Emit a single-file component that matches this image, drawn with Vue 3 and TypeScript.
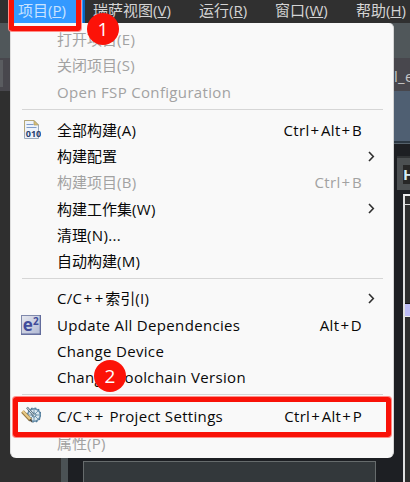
<script setup lang="ts">
interface MenuItem {
  label: string
  shortcut?: string
  icon?: 'binary' | 'e2' | 'settings'
  disabled?: boolean
  submenu?: boolean
}

const groups: MenuItem[][] = [
  [
    { label: '打开项目(E)', disabled: true },
    { label: '关闭项目(S)', disabled: true },
    { label: 'Open FSP Configuration', disabled: true },
  ],
  [
    { label: '全部构建(A)', shortcut: 'Ctrl+Alt+B', icon: 'binary' },
    { label: '构建配置', submenu: true },
    { label: '构建项目(B)', shortcut: 'Ctrl+B', disabled: true },
    { label: '构建工作集(W)', submenu: true },
    { label: '清理(N)...' },
    { label: '自动构建(M)' },
  ],
  [
    { label: 'C/C++索引(I)', submenu: true },
    { label: 'Update All Dependencies', shortcut: 'Alt+D', icon: 'e2' },
    { label: 'Change Device' },
    { label: 'Change Toolchain Version' },
  ],
  [
    { label: 'C/C++ Project Settings', shortcut: 'Ctrl+Alt+P', icon: 'settings' },
    { label: '属性(P)', disabled: true },
  ],
]

const bar = [
  { name: '项目', key: 'P' },
  { name: '瑞萨视图', key: 'V' },
  { name: '运行', key: 'R' },
  { name: '窗口', key: 'W' },
  { name: '帮助', key: 'H' },
]

// Splits a text into runs, so that Latin letters and plus signs get their own tracking.
function runs(text: string): { text: string; kind: string }[] {
  const parts = text.match(/\++|[\u4e00-\u9fff]+|[^+\u4e00-\u9fff]+/g) ?? []
  return parts.map((part) => ({
    text: part,
    kind: part[0] === '+' ? 'plus' : /[\u4e00-\u9fff]/.test(part) ? 'han' : 'latin',
  }))
}
</script>

<template>
  <div class="window">
    <nav class="menubar">
      <span v-for="(b, i) in bar" :key="b.key" class="top" :class="{ active: i === 0 }">{{ b.name }}(<u>{{ b.key }}</u>)</span>
    </nav>
    <div class="toolbar"></div>
    <div class="tabs"><span class="stub"></span><span class="tabname">l_e</span></div>
    <div class="workspace">
      <div class="side"></div>
      <div class="sash"></div>
      <div class="editor"><div class="panel"></div></div>
      <div class="right">
        <div class="header"></div>
        <div class="gap"></div>
        <div class="tab"><span>H</span></div>
        <div class="list">
          <div class="first"></div>
          <div class="space"></div>
          <div class="selected"></div>
        </div>
      </div>
    </div>

    <div class="menu">
      <div v-for="(group, g) in groups" :key="g" class="group">
        <div v-for="item in group" :key="item.label" class="item" :class="{ disabled: item.disabled }">
          <span class="icon">
            <svg v-if="item.icon === 'binary'" width="20" height="20" viewBox="0 0 20 20">
              <path d="M3.5 .5H13L17.5 5V18.5H3.5Z" fill="#edf3fb" stroke="#9caabc" />
              <path d="M3.5 12V.5H13" fill="none" stroke="#b5a778" />
              <path d="M13 .5V5h4.5Z" fill="#d9bf72" stroke="#ad9c68" stroke-width=".7" />
              <path d="M5.5 4.5h7M5.5 7.5h10" stroke="#7e9bc9" />
              <text x="4.8" y="16.6" class="bits">010</text>
            </svg>
            <svg v-else-if="item.icon === 'e2'" width="20" height="20" viewBox="0 0 20 20">
              <defs>
                <linearGradient id="e2bg" x2="1" y2="1"><stop stop-color="#e6e8ef" /><stop offset="1" stop-color="#b0b8d3" /></linearGradient>
              </defs>
              <rect x=".5" y=".5" width="19" height="19" fill="url(#e2bg)" stroke="#8089ac" />
              <path d="M0 19.2h20M19.3 0v20" stroke="#606a9b" stroke-width="1.2" />
              <text x="1.8" y="16" class="e">e</text>
              <text x="12" y="9.5" class="two">2</text>
            </svg>
            <svg v-else-if="item.icon === 'settings'" width="20" height="20" viewBox="0 0 20 20">
              <circle cx="13" cy="9" r="6.3" fill="#dce8ef" stroke="#648daa" stroke-width="1.5" />
              <circle cx="13" cy="9" r="7" fill="none" stroke="#4f7997" stroke-width="1.2" stroke-dasharray="1.7 2" />
              <path d="M13 3v12M7 9h12M9 5l8 8M17 5l-8 8" stroke="#769ab0" />
              <circle cx="13" cy="9" r="2" fill="#edf5f8" stroke="#547e98" />
              <path d="M1.5 5.5l8 8.5" stroke="#9a7a42" stroke-width="3.8" />
              <path d="M1.5 5l8 8.5" stroke="#e8ca86" stroke-width="2" />
              <path d="M8 14l3.3 2.8-.9-4.3Z" fill="#554d40" />
              <path d="M6 1.5l7 8" stroke="#526b7c" stroke-width="2.3" />
              <path d="M6 1.5l7 8" stroke="#d9e4e8" stroke-width="1" />
            </svg>
          </span>
          <span class="label"><span v-for="(r, k) in runs(item.label)" :key="k" :class="r.kind">{{ r.text }}</span></span>
          <span v-if="item.shortcut" class="shortcut"><span v-for="(r, k) in runs(item.shortcut)" :key="k" :class="r.kind">{{ r.text }}</span></span>
          <svg v-if="item.submenu" class="arrow" width="7" height="11" viewBox="0 0 7 11"><path d="M1 1l4.3 4.5L1 10" fill="none" stroke="#303030" stroke-width="1.6" /></svg>
        </div>
      </div>
    </div>

    <div class="mark mark-top"></div>
    <div class="mark mark-item"></div>
    <div class="badge one">1</div>
    <div class="badge two-badge">2</div>
  </div>
</template>

<style>
body { margin: 0; overflow: hidden; }
</style>

<style scoped>
.window {
  position: relative;
  width: 410px;
  height: 482px;
  overflow: hidden;
  display: flex;
  flex-direction: column;
  background: #2f2f2f;
  font-family: "Open Sans", "Noto Sans CJK SC", sans-serif;
  font-size: 15px;
}
.menubar { display: flex; height: 23px; flex: none; background: #303030; color: #d4d4d4; line-height: 20px; white-space: nowrap; }
.top { box-sizing: border-box; flex: none; padding-left: 8px; }
.top:nth-child(1) { margin-left: 10px; width: 75px; }
.top:nth-child(2) { width: 106px; }
.top:nth-child(3) { width: 76px; }
.top:nth-child(4) { width: 81px; }
.top u { text-underline-offset: 1px; text-decoration-thickness: 1px; }
.active { background: #3399ff; color: #c9e3ff; border-right: 2px solid #0865bd; }
.toolbar { height: 35px; flex: none; background: #50575a; }
.tabs { height: 33px; flex: none; display: flex; justify-content: space-between; background: #48474d; overflow: hidden; }
.stub { width: 3px; height: 27px; margin-top: 2px; background: #5a5c60; }
.tabname { width: 16px; line-height: 36px; color: #c5c5c5; white-space: nowrap; overflow: hidden; letter-spacing: .3px; }
.workspace { flex: 1; display: flex; min-height: 0; }
.side { width: 61px; background: #2f2f2f; }
.sash { width: 7px; background: #4b5255; }
.editor { width: 326px; box-sizing: border-box; padding: 370px 18px 0 15px; background: #1d1f23; }
.panel { height: 21px; box-sizing: border-box; border: 1px solid #666b6c; border-bottom: 0; background: #33383b; }
.right { width: 16px; display: flex; flex-direction: column; background: #1d1f23; }
.header { height: 50px; background: #4f5f72; border-bottom: 2px solid #2b3742; flex: none; }
.gap { height: 12px; border-top: 1px solid #55616b; flex: none; }
.tab { height: 34px; box-sizing: border-box; flex: none; margin-left: 3px; padding: 7px 0 0 6px; background: #4c5052; border-top: 2px solid #303335; overflow: hidden; }
.tab span { display: block; height: 19px; background: #272727; color: #d8edf4; font-size: 15px; font-weight: 700; line-height: 18px; }
.list { flex: 1; margin: 4px 0 0 9px; border-left: 2px solid #e0e0e0; border-top: 2px solid #eee; background: #2e2e2e; }
.first { height: 8px; border-bottom: 1px solid #ddd; }
.space { height: 98px; }
.selected { height: 12px; background: #bdbcf4; border-bottom: 1px solid #e8e8e8; border-top: 1px solid #111; }

.menu {
  position: absolute;
  left: 10px;
  top: 23px;
  width: 384px;
  height: 435px;
  box-sizing: border-box;
  padding: 4px 10px 0 11px;
  border-radius: 5px 5px 6px 6px;
  background: #f9f9f9;
  border-right: 1px solid #d5d5d5;
  border-left: 1px solid #dedede;
  color: #080808;
}
.group + .group { border-top: 1px solid #d6d6d6; margin-top: 3px; padding-top: 8px; }
.group:nth-child(3) { padding-top: 7px; }
.item { display: flex; align-items: center; height: 26.25px; line-height: 24px; white-space: nowrap; padding-right: 21px; }
.group:nth-child(4) .item { height: 27px; }
.icon { width: 35px; height: 22px; flex: none; }
.icon svg { display: block; margin-left: -1px; }
.label, .shortcut { height: 26px; }
.label { flex: 1; }
.latin { letter-spacing: .33px; }
.plus { letter-spacing: 2.8px; margin-left: 1px; margin-right: -1px; }
.disabled { color: #a2a2a2; }
.arrow { margin: -2px -13px 0 0; }
.bits { font: 700 9px "Open Sans", sans-serif; fill: #263f70; }
.e { font: 700 17px "Open Sans", sans-serif; fill: #414b9b; }
.two { font: 700 10px "Open Sans", sans-serif; fill: #3f4a98; }
.mark { position: absolute; box-sizing: border-box; border: 5px solid #f91208; border-radius: 3px; box-shadow: 0 0 0 1px #ff8d88; }
.mark-top { left: 9px; top: -7px; width: 72px; height: 38px; }
.mark-item { left: 13px; top: 397px; width: 378px; height: 40px; }
.badge { position: absolute; width: 32px; height: 32px; border-radius: 50%; background: #fc1208; color: #fff; font-size: 19px; line-height: 32px; text-align: center; }
.one { left: 87px; top: 13px; }
.two-badge { left: 94px; top: 360px; }
</style>
